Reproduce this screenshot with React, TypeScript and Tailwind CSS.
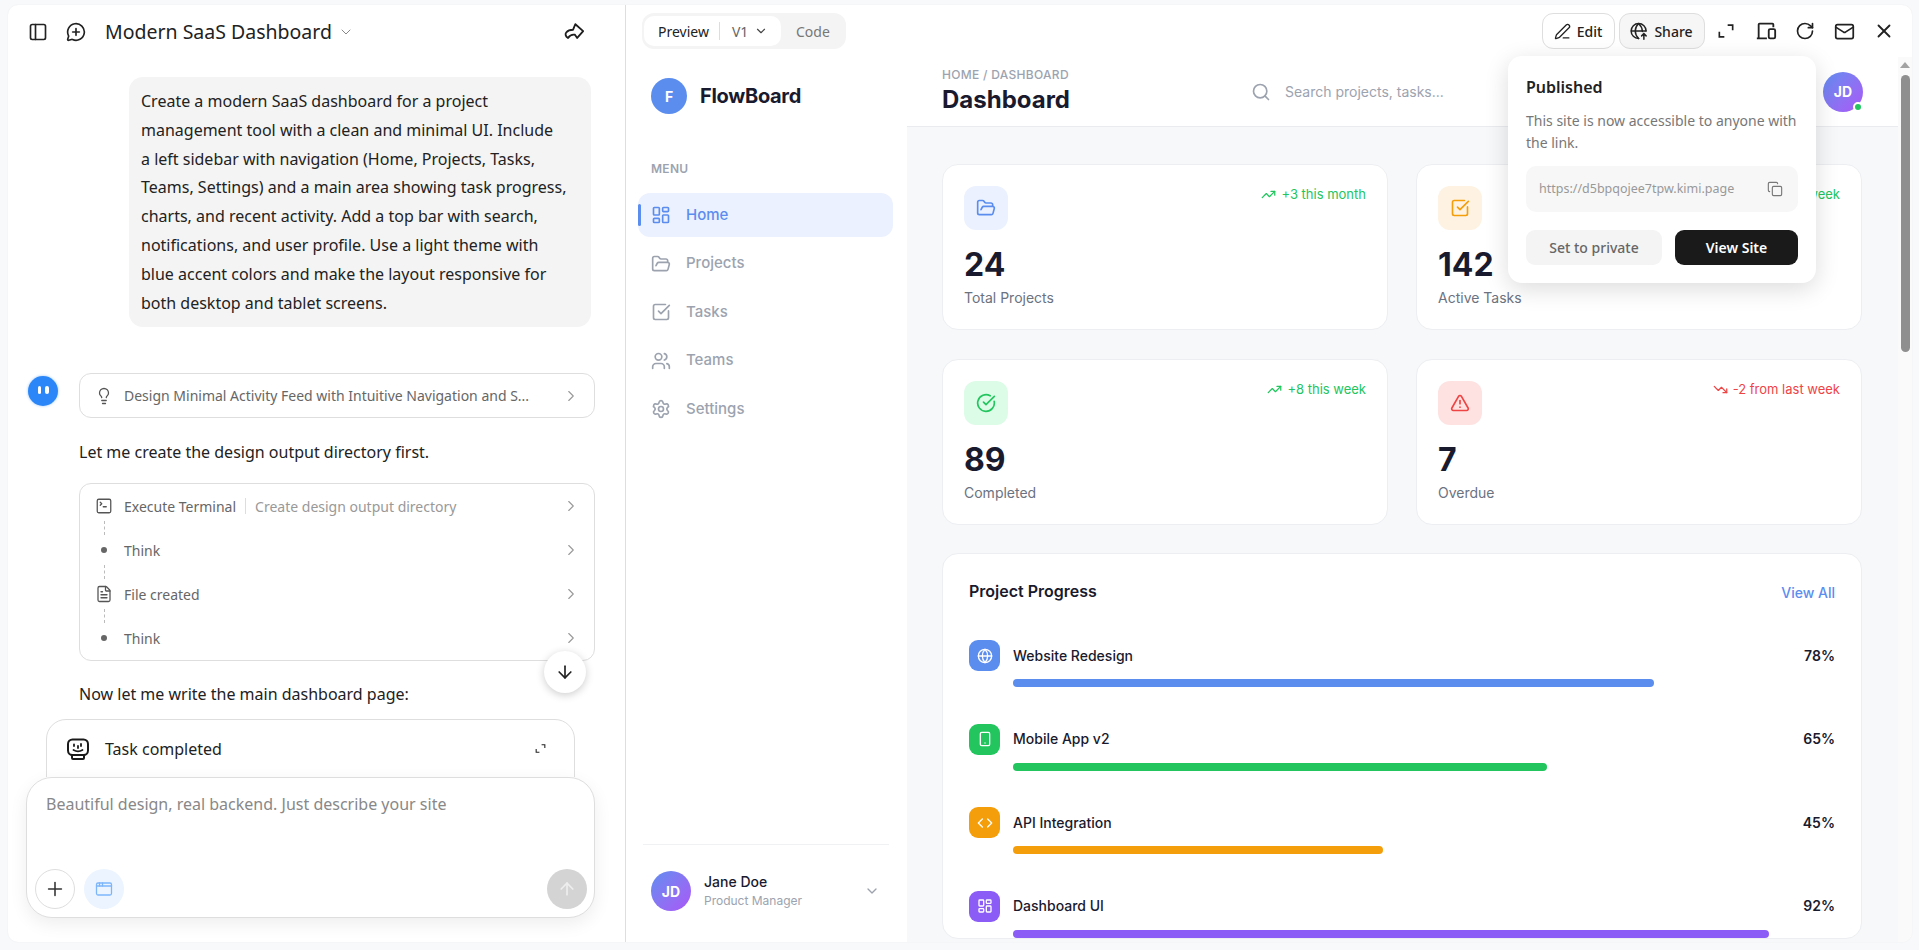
import {
  AppWindow,
  ArrowDown,
  ArrowUp,
  ChevronDown,
  ChevronRight,
  CircleCheckBig,
  Code,
  Copy,
  FileText,
  FolderOpen,
  Globe,
  LayoutDashboard,
  Lightbulb,
  Mail,
  MessageCirclePlus,
  PanelLeft,
  PenLine,
  Plus,
  RotateCw,
  Search,
  Settings,
  Smartphone,
  SquareCheckBig,
  SquareTerminal,
  TrendingDown,
  TrendingUp,
  TriangleAlert,
  Users,
  X,
} from "lucide-react"

const promptLines = [
  "Create a modern SaaS dashboard for a project",
  "management tool with a clean and minimal UI. Include",
  "a left sidebar with navigation (Home, Projects, Tasks,",
  "Teams, Settings) and a main area showing task progress,",
  "charts, and recent activity. Add a top bar with search,",
  "notifications, and user profile. Use a light theme with",
  "blue accent colors and make the layout responsive for",
  "both desktop and tablet screens.",
]

const navItems = [
  { label: "Home", icon: LayoutDashboard, active: true },
  { label: "Projects", icon: FolderOpen, active: false },
  { label: "Tasks", icon: SquareCheckBig, active: false },
  { label: "Teams", icon: Users, active: false },
  { label: "Settings", icon: Settings, active: false },
]

const stats = [
  { value: "24", label: "Total Projects", trend: "+3 this month", up: true, icon: FolderOpen, box: "bg-[#ebf1fe] text-[#5b8def]" },
  { value: "142", label: "Active Tasks", trend: "+12 this week", up: true, icon: SquareCheckBig, box: "bg-[#fef3e2] text-[#f59e0b]" },
  { value: "89", label: "Completed", trend: "+8 this week", up: true, icon: CircleCheckBig, box: "bg-[#dcfce7] text-[#22c55e]" },
  { value: "7", label: "Overdue", trend: "-2 from last week", up: false, icon: TriangleAlert, box: "bg-[#fee2e2] text-[#ef4444]" },
]

const projects = [
  { name: "Website Redesign", pct: 78, icon: Globe, box: "bg-[#5b8def]" },
  { name: "Mobile App v2", pct: 65, icon: Smartphone, box: "bg-[#22c55e]" },
  { name: "API Integration", pct: 45, icon: Code, box: "bg-[#f59e0b]" },
  { name: "Dashboard UI", pct: 92, icon: LayoutDashboard, box: "bg-[#8b5cf6]" },
]

function ShareArrow() {
  return (
    <svg width="22" height="22" viewBox="0 0 24 24" fill="none" stroke="#1f1f1f" strokeWidth="2" strokeLinejoin="round" strokeLinecap="round">
      <path d="M13.5 3.5 22 11l-6.5 7.5-2.5-3.5c-3-.5-5.5.5-7.5 3.5C3 17 2 14.500 3.500 12.500 5.500 10 8.500 9.500 11 9.500z" />
    </svg>
  )
}

function RobotIcon() {
  return (
    <svg width="24" height="24" viewBox="0 0 24 24" fill="none" stroke="#1a1a1a" strokeWidth="2" strokeLinecap="round" strokeLinejoin="round">
      <rect x="2" y="2.500" width="20" height="15.500" rx="4.500" />
      <path d="M6 18.500v2.500a1 1 0 0 0 1 1h10a1 1 0 0 0 1-1v-2.500" />
      <path d="M8 7.500v1.500M15 7v2M12 9v2M7.500 13c2.500 1.500 6.500 1.500 9 0" strokeWidth="1.800" />
    </svg>
  )
}

function CornerExpand({ size, width }: { size: number; width: number }) {
  return (
    <svg width={size} height={size} viewBox="0 0 24 24" fill="none" stroke="#222" strokeWidth={width}>
      <path d="M14 5h6v6M4 13v6h6" />
    </svg>
  )
}

function DeviceIcon() {
  return (
    <svg width="22" height="22" viewBox="0 0 24 24" fill="none" stroke="#222" strokeWidth="2" strokeLinejoin="round">
      <path d="M20 8V5a1 1 0 0 0-1-1H5a1 1 0 0 0-1 1v15M2 20h11" />
      <rect x="15" y="10" width="7" height="10" rx="1.500" />
    </svg>
  )
}

function GlobeUpload() {
  return (
    <svg width="18" height="18" viewBox="0 0 24 24" fill="none" stroke="#222" strokeWidth="2" strokeLinecap="round">
      <path d="M21.500 12a10 10 0 1 0-10 10" />
      <path d="M2 12h19M11.500 2c-6 6-6 14 0 20M11.500 2c3.500 3.500 5 7 5 10.500" />
      <path d="M18.500 23v-7M15.500 18.500l3-3 3 3" />
    </svg>
  )
}

function ToolbarIcon({ children }: { children: React.ReactNode }) {
  return <span className="flex w-[39.500px] justify-center text-[#222]">{children}</span>
}

function StepRow({ icon, label, note, line }: { icon: React.ReactNode; label: string; note?: string; line?: boolean }) {
  return (
    <div className="relative flex h-11 items-center pl-[15px] pr-[14px]">
      <span className="flex w-[18px] shrink-0 justify-center text-[#555]">{icon}</span>
      <span className="ml-[11px] text-[14px] text-[#666]">{label}</span>
      {note && <span className="ml-[9px] h-4 w-px bg-[#ddd]" />}
      {note && <span className="ml-[9px] text-[14px] text-[#999]">{note}</span>}
      <ChevronRight size={18} strokeWidth={1.500} className="ml-auto text-[#999]" />
      {line && <span className="absolute left-[24px] top-[37px] h-[14px] border-l border-dashed border-[#bbb]" />}
    </div>
  )
}

function ChatPanel() {
  return (
    <div className="flex w-[618px] shrink-0 flex-col border-r border-[#dedede]">
      <div className="flex h-[54px] shrink-0 items-center pl-[20px] pr-[40px] text-[#222]">
        <PanelLeft size={20} strokeWidth={2} />
        <MessageCirclePlus size={20} strokeWidth={2} className="ml-[18px]" />
        <span className="ml-[19px] text-[19.500px] text-[#222]">Modern SaaS Dashboard</span>
        <ChevronDown size={16} strokeWidth={1.500} className="ml-[6px] text-[#888]" />
        <span className="ml-auto"><ShareArrow /></span>
      </div>

      <div className="relative flex-1 overflow-hidden text-[16px] text-[#222]">
        <div className="ml-[121px] mr-[34px] mt-[18px] rounded-[14px] bg-[#f4f4f4] px-[12px] py-[10px] leading-[28.800px]">
          {promptLines.map((line) => (
            <div key={line} className="whitespace-nowrap">{line}</div>
          ))}
        </div>

        <div className="ml-[20px] mr-[30px] mt-[46px] flex gap-[21px]">
          <div className="mt-[3px] flex h-[30px] w-[30px] shrink-0 items-center justify-center gap-[4px] rounded-full bg-[#2b87f8] shadow-[0_0_3px_#9cc6fb]">
            <span className="mb-[3px] h-[8px] w-[3.500px] rounded-full bg-white" />
            <span className="mb-[3px] h-[8px] w-[3.500px] rounded-full bg-white" />
          </div>
          <div className="min-w-0 flex-1">
            <div className="flex h-[45px] items-center rounded-[12px] border border-[#dedede] pl-[15px] pr-[14px]">
              <Lightbulb size={18} strokeWidth={1.700} className="shrink-0 text-[#555]" />
              <span className="ml-[11px] whitespace-nowrap text-[14px] text-[#666]">Design Minimal Activity Feed with Intuitive Navigation and S...</span>
              <ChevronRight size={18} strokeWidth={1.500} className="ml-auto shrink-0 text-[#999]" />
            </div>
            <p className="mt-[20px] leading-[29px]">Let me create the design output directory first.</p>
            <div className="mt-[16px] rounded-[12px] border border-[#dedede]">
              <StepRow icon={<SquareTerminal size={18} strokeWidth={1.700} />} label="Execute Terminal" note="Create design output directory" line />
              <StepRow icon={<span className="h-[6px] w-[6px] rounded-full bg-[#666]" />} label="Think" line />
              <StepRow icon={<FileText size={18} strokeWidth={1.700} />} label="File created" line />
              <StepRow icon={<span className="h-[6px] w-[6px] rounded-full bg-[#666]" />} label="Think" />
            </div>
            <p className="mt-[19px] leading-[29px]">Now let me write the main dashboard page:</p>
          </div>
        </div>

        <div className="ml-[38px] mr-[50px] mt-[10px] flex h-[90px] items-start rounded-t-[20px] border border-[#dedede] pl-[19px] pr-[27px] pt-[17px]">
          <RobotIcon />
          <span className="ml-[15px] text-[16px] leading-[24px] text-[#222]">Task completed</span>
          <span className="ml-auto mt-[5px]"><CornerExpand size={13} width={2} /></span>
        </div>

        <button className="absolute left-[536px] top-[592px] flex h-[42px] w-[42px] items-center justify-center rounded-full bg-white shadow-[0_2px_8px_rgba(0,0,0,0.2)]">
          <ArrowDown size={20} strokeWidth={2} className="text-[#222]" />
        </button>
      </div>

      <div className="relative z-10 mb-[24px] ml-[18px] mr-[30px] flex h-[141px] shrink-0 flex-col rounded-[26px] border border-[#dedede] bg-white pb-[8px] pl-[8px] pr-[7px] pt-[13px] shadow-[0_6px_18px_rgba(0,0,0,0.07)]">
        <div className="pl-[11px] text-[16px] leading-[26px] text-[#888]">Beautiful design, real backend. Just describe your site</div>
        <div className="mt-auto flex items-center gap-[9px]">
          <span className="flex h-10 w-10 items-center justify-center rounded-full border border-[#dedede] text-[#333]">
            <Plus size={22} strokeWidth={1.700} />
          </span>
          <span className="flex h-10 w-10 items-center justify-center rounded-full bg-[#ebf4ff] text-[#7db5fb]">
            <AppWindow size={18} strokeWidth={1.700} />
          </span>
          <span className="ml-auto flex h-10 w-10 items-center justify-center rounded-full bg-[#d4d4d4] text-[#eeeeee]">
            <ArrowUp size={20} strokeWidth={2} />
          </span>
        </div>
      </div>
    </div>
  )
}

function Toolbar() {
  return (
    <div className="flex h-[52px] shrink-0 items-center pl-[16px] pr-[8px] text-[14px]">
      <div className="flex h-9 items-center rounded-[12px] bg-[#f4f4f4] pl-[2px] text-[#222]">
        <div className="flex h-[30px] w-[137px] items-center rounded-[10px] bg-white pl-[14px]">
          <span>Preview</span>
          <span className="ml-[10px] h-[18px] w-px bg-[#ddd]" />
          <span className="ml-[12px] text-[#666]">V1</span>
          <ChevronDown size={14} strokeWidth={2} className="ml-[6px] text-[#444]" />
        </div>
        <span className="ml-[15px] mr-[16px] text-[#777]">Code</span>
      </div>
      <div className="ml-auto flex h-9 w-[73px] items-center justify-center gap-[6px] rounded-[11px] border border-[#dedede] font-medium text-[#222]">
        <PenLine size={17} strokeWidth={1.800} />Edit
      </div>
      <div className="ml-[4px] flex h-9 w-[86px] items-center justify-center gap-[6px] rounded-[11px] border border-[#dedede] bg-[#f6f6f6] font-medium text-[#222]">
        <GlobeUpload />Share
      </div>
      <div className="ml-[2px] flex items-center">
        <ToolbarIcon><CornerExpand size={20} width={2} /></ToolbarIcon>
        <ToolbarIcon><DeviceIcon /></ToolbarIcon>
        <ToolbarIcon><RotateCw size={20} strokeWidth={2} /></ToolbarIcon>
        <ToolbarIcon><Mail size={21} strokeWidth={2} /></ToolbarIcon>
        <ToolbarIcon><X size={22} strokeWidth={2} /></ToolbarIcon>
      </div>
    </div>
  )
}

function Sidebar() {
  return (
    <aside className="flex w-[281px] shrink-0 flex-col bg-white">
      <div className="ml-[25px] mt-[21px] flex items-center gap-[13px]">
        <span className="flex h-9 w-9 items-center justify-center rounded-full bg-[#5b8def] text-[14px] font-bold text-white">F</span>
        <span className="text-[20px] font-bold tracking-[-0.300px] text-[#1a1a2e]">FlowBoard</span>
      </div>
      <div className="ml-[25px] mt-[47px] text-[12px] font-semibold leading-4 tracking-[0.300px] text-[#9ca3af]">MENU</div>
      <nav className="ml-[12px] mr-[14px] mt-[16px] flex flex-col gap-[4.500px]">
        {navItems.map((item) => (
          <div
            key={item.label}
            className={`relative flex h-11 items-center gap-[15px] rounded-[12px] pl-[13px] text-[15px] font-medium ${item.active ? "bg-[#ebf1fe] text-[#5b8def]" : "text-[#9ca3af]"}`}
          >
            {item.active && <span className="absolute left-0 top-[11px] h-[22px] w-[3px] rounded-full bg-[#5b8def]" />}
            <item.icon size={20} strokeWidth={2} />
            {item.label}
          </div>
        ))}
      </nav>
      <div className="mb-[31px] ml-[17px] mr-[18px] mt-auto border-t border-[#f0f1f3] pl-[8px] pr-[9px] pt-[26px]">
        <div className="flex items-center">
          <span className="flex h-10 w-10 items-center justify-center rounded-full bg-linear-to-br from-[#5b8def] to-[#a855f7] text-[14px] font-bold text-white">JD</span>
          <div className="ml-[13px]">
            <div className="text-[14px] font-medium leading-[20px] text-[#1a1a2e]">Jane Doe</div>
            <div className="text-[12px] leading-[18px] text-[#9ca3af]">Product Manager</div>
          </div>
          <ChevronDown size={16} strokeWidth={2} className="ml-auto text-[#9ca3af]" />
        </div>
      </div>
    </aside>
  )
}

function StatCard({ stat }: { stat: (typeof stats)[number] }) {
  return (
    <div className="h-[166px] rounded-[16px] border border-[#eceef1] bg-white p-[21px]">
      <div className="flex items-start justify-between">
        <span className={`flex h-11 w-11 items-center justify-center rounded-[12px] ${stat.box}`}>
          <stat.icon size={20} strokeWidth={2} />
        </span>
        <span className={`flex items-center gap-[5px] text-[13px] leading-4 ${stat.up ? "text-[#22c55e]" : "text-[#ef4444]"}`}>
          {stat.up ? <TrendingUp size={15} strokeWidth={2} /> : <TrendingDown size={15} strokeWidth={2} />}
          {stat.trend}
        </span>
      </div>
      <div className="mt-[16px] text-[32px] font-bold leading-[38px] text-[#1a1a2e]">{stat.value}</div>
      <div className="mt-[4px] text-[14px] leading-[20px] text-[#6b7280]">{stat.label}</div>
    </div>
  )
}

function MainArea() {
  return (
    <main className="flex min-w-0 flex-1 flex-col overflow-hidden bg-[#f7f8fa]">
      <header className="flex h-[70px] shrink-0 items-center border-b border-[#e9ebef] bg-white pl-[35px] pr-[35px]">
        <div className="w-[309px]">
          <div className="text-[12px] font-medium leading-4 tracking-[0.300px] text-[#9ca3af]">HOME / DASHBOARD</div>
          <div className="mt-[1px] text-[24px] font-bold leading-8 text-[#1a1a2e]">Dashboard</div>
        </div>
        <Search size={20} strokeWidth={2} className="text-[#9ca3af]" />
        <span className="ml-[14px] text-[14px] text-[#9ca3af]">Search projects, tasks...</span>
        <span className="relative ml-auto flex h-10 w-10 items-center justify-center rounded-full bg-linear-to-br from-[#5b8def] to-[#a855f7] text-[14px] font-bold text-white">
          JD
          <span className="absolute bottom-0 right-0 h-[10px] w-[10px] rounded-full border-2 border-white bg-[#22c55e]" />
        </span>
      </header>

      <div className="flex-1 overflow-hidden pl-[35px] pr-[36px] pt-[37px]">
        <div className="grid grid-cols-2 gap-x-[28px] gap-y-[29px]">
          {stats.map((stat) => <StatCard key={stat.label} stat={stat} />)}
        </div>
        <section className="mt-[28px] rounded-[16px] border border-[#eceef1] bg-white pl-[26px] pr-[26px] pt-[25px]">
          <div className="flex h-6 items-center justify-between">
            <h2 className="text-[16px] font-semibold text-[#1a1a2e]">Project Progress</h2>
            <span className="mt-[3px] text-[14px] font-medium text-[#5b8def]">View All</span>
          </div>
          <div className="mt-[37px] flex flex-col gap-[36.500px]">
            {projects.map((project) => (
              <div key={project.name} className="flex gap-[13px]">
                <span className={`flex h-[31px] w-[31px] shrink-0 items-center justify-center rounded-[9px] text-white ${project.box}`}>
                  <project.icon size={16} strokeWidth={2} />
                </span>
                <div className="flex-1">
                  <div className="flex h-[30px] items-center justify-between text-[14px] text-[#1a1a2e]">
                    <span className="font-medium">{project.name}</span>
                    <span className="font-semibold">{project.pct}%</span>
                  </div>
                  <div className="mt-[9px] h-2 rounded-full">
                    <div className={`h-full rounded-full ${project.box}`} style={{ width: `${project.pct}%` }} />
                  </div>
                </div>
              </div>
            ))}
          </div>
        </section>
      </div>
    </main>
  )
}

function PublishedPopover() {
  return (
    <div className="absolute right-[96px] top-[51px] z-20 w-[308px] rounded-[14px] bg-white px-[18px] pb-[18px] pt-[18px] shadow-[0_6px_24px_rgba(0,0,0,0.14)] [font-family:'Noto_Sans',sans-serif]">
      <div className="text-[16px] font-semibold leading-[26px] text-[#222]">Published</div>
      <p className="mt-[10px] text-[14px] leading-[21.500px] text-[#777]">This site is now accessible to anyone with the link.</p>
      <div className="mt-[13px] flex h-[46px] items-center justify-between rounded-[10px] bg-[#f7f7f7] pl-[13px] pr-[15px]">
        <span className="text-[12.500px] text-[#999]">https://d5bpqojee7tpw.kimi.page</span>
        <Copy size={16} strokeWidth={1.700} className="text-[#777]" />
      </div>
      <div className="mt-[18px] flex gap-[13px]">
        <button className="h-[35px] w-[136px] rounded-[9px] bg-[#f4f4f4] text-[14px] font-medium text-[#666]">Set to private</button>
        <button className="h-[35px] flex-1 rounded-[9px] bg-[#1a1a1a] text-[14px] font-semibold text-white">View Site</button>
      </div>
    </div>
  )
}

export default function App() {
  return (
    <div className="flex h-screen overflow-hidden bg-[#f8f9fb] pb-[8px] pl-[8px] pr-[7px] pt-[5px] [font-family:'Noto_Sans',sans-serif]">
      <div className="flex flex-1 overflow-hidden rounded-[10px] bg-white shadow-[0_0_2px_rgba(0,0,0,0.06)]">
        <ChatPanel />
        <div className="relative flex min-w-0 flex-1 flex-col">
          <Toolbar />
          <div className="flex min-h-0 flex-1">
            <div className="flex min-w-0 flex-1 [font-family:Inter,sans-serif]">
              <Sidebar />
              <MainArea />
            </div>
            <div className="flex w-[14px] shrink-0 flex-col items-center bg-[#fafafa]">
              <span className="mt-[5px] h-0 w-0 border-x-[5px] border-b-[6px] border-x-transparent border-b-[#a3a3a3]" />
              <span className="mt-[7px] h-[277px] w-[9px] rounded-full bg-[#8f8f8f]" />
            </div>
          </div>
          <PublishedPopover />
        </div>
      </div>
    </div>
  )
}
